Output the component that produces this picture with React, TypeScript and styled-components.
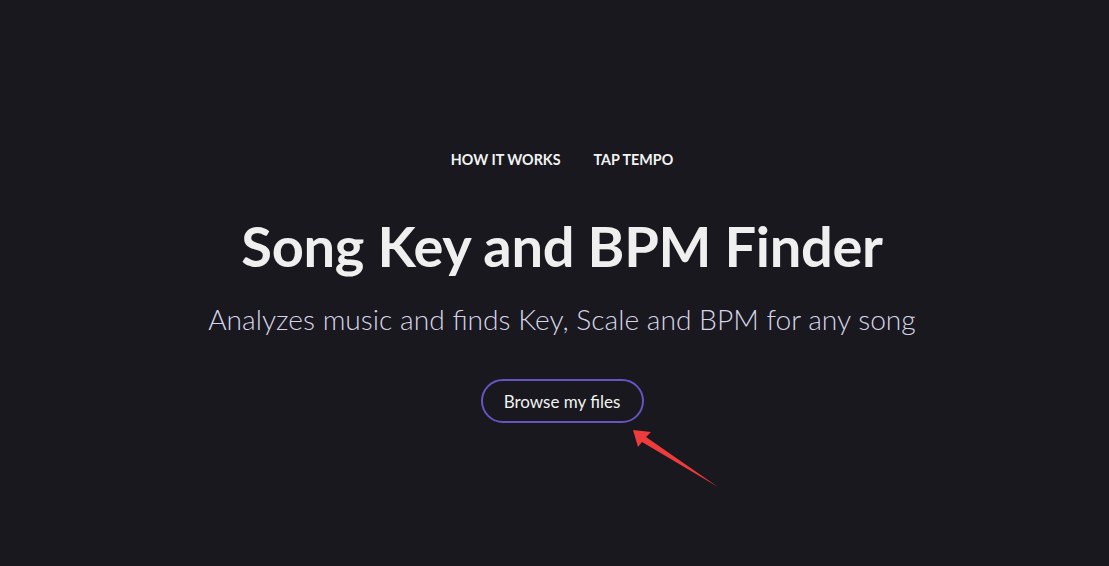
import styled, { createGlobalStyle } from "styled-components";

const GlobalStyle = createGlobalStyle`
    html, body {
        margin: 0;
        padding: 0;
        background: #18181e;
    }
    body {
        font-family: Lato, "Noto Sans", sans-serif;
        color: #f0f0f0;
    }
`

const Page = styled.div`
    position: relative;
    width: 100%;
    height: 566px;
    overflow: hidden;
    display: flex;
    flex-direction: column;
    align-items: center;
    padding: 149px 0 0 15px;
    box-sizing: border-box;
`

const Nav = styled.nav`
    display: flex;
    gap: 33px;
`

const NavLink = styled.a`
    font-size: 14.3px;
    font-weight: 700;
    color: #f2f2f2;
    line-height: 22px;
    text-decoration: none;
    cursor: pointer;
`

const Title = styled.h1`
    margin: 35px 0 0;
    font-size: 56px;
    font-weight: 700;
    line-height: 80px;
    color: #efefef;
    letter-spacing: -0.3px;
`

const Subtitle = styled.p`
    margin: 0;
    font-size: 28.2px;
    font-weight: 300;
    line-height: 66px;
    color: #d6d4e6;
`

const BrowseButton = styled.button`
    margin-top: 27px;
    height: 44px;
    width: 163px;
    border: 2px solid #6654c0;
    border-radius: 22px;
    background: transparent;
    color: #f2f2f2;
    font-family: inherit;
    font-size: 17px;
    cursor: pointer;
`

const Annotation = styled.svg`
    position: absolute;
    left: 0;
    top: 0;
    pointer-events: none;
`

const App = () => {
    return (
        <>
            <GlobalStyle />
            <Page>
                <Nav>
                    <NavLink>HOW IT WORKS</NavLink>
                    <NavLink>TAP TEMPO</NavLink>
                </Nav>
                <Title>Song Key and BPM Finder</Title>
                <Subtitle>Analyzes music and finds Key, Scale and BPM for any song</Subtitle>
                <BrowseButton>Browse my files</BrowseButton>
                <Annotation width="1109" height="566" viewBox="0 0 1109 566">
                    <polygon
                        points="633,430 651,432 646,437 718,487 642,442 638,447"
                        fill="#ee3b3b"
                    />
                </Annotation>
            </Page>
        </>
    );
}

export default App;
